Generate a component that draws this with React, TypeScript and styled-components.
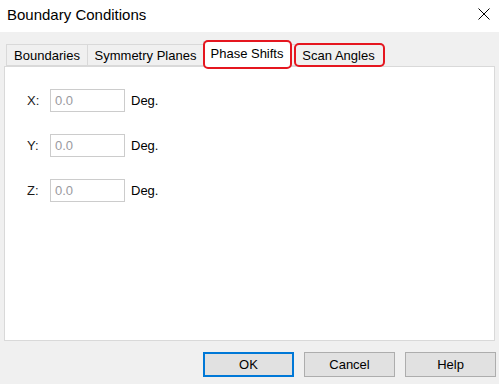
import React from "react";
import styled, { createGlobalStyle } from "styled-components";

const Global = createGlobalStyle`
  html, body { margin: 0; padding: 0; background: #f0f0f0; }
  body { font-family: "Liberation Sans", Arial, sans-serif; font-size: 13px; color: #000; }
  * { box-sizing: border-box; }
`;

const Window = styled.div`
  width: 499px;
  height: 384px;
  display: flex;
  flex-direction: column;
  background: #f0f0f0;
  overflow: hidden;
`;

const TitleBar = styled.div`
  height: 32px;
  background: #ffffff;
  display: flex;
  align-items: center;
  justify-content: space-between;
  padding: 0 9px 4px 7px;
`;

const Title = styled.span`
  font-size: 15px;
  color: #000;
`;

const CloseIcon = styled.svg`
  width: 12px;
  height: 12px;
  display: block;
`;

const Body = styled.div`
  padding: 9px 4px 0 4px;
  display: flex;
  flex-direction: column;
`;

const TabStrip = styled.div`
  height: 25px;
  display: flex;
  align-items: flex-end;
  padding-left: 2px;
  position: relative;
  z-index: 1;
`;

const Tab = styled.div<{ $w: number; $selected?: boolean; $marked?: boolean; $markLeft?: number }>`
  position: relative;
  width: ${(p) => p.$w}px;
  height: ${(p) => (p.$selected ? 26 : 22)}px;
  margin-bottom: ${(p) => (p.$selected ? -1 : 0)}px;
  margin-left: -1px;
  &:first-child { margin-left: 0; }
  background: ${(p) => (p.$selected ? "#ffffff" : "#f0f0f0")};
  border: 1px solid #d9d9d9;
  border-bottom: ${(p) => (p.$selected ? "none" : "1px solid #d9d9d9")};
  display: flex;
  align-items: center;
  justify-content: center;
  font-size: 13px;
  color: #000;
  white-space: nowrap;
  padding-bottom: ${(p) => (p.$selected ? 2 : 0)}px;
  padding-left: ${(p) => (p.$markLeft ? p.$markLeft : 0)}px;
  z-index: ${(p) => (p.$selected ? 2 : 1)};
  &::after {
    content: "";
    display: ${(p) => (p.$marked ? "block" : "none")};
    position: absolute;
    top: -2px;
    bottom: -2px;
    left: ${(p) => (p.$markLeft ?? -1)}px;
    right: -2px;
    border: 2px solid #e5161f;
    border-radius: 5px;
  }
`;

const Panel = styled.div`
  height: 275px;
  background: #ffffff;
  border: 1px solid #d9d9d9;
  padding: 22px 0 0 22px;
  display: flex;
  flex-direction: column;
  gap: 22px;
`;

const FieldRow = styled.div`
  display: grid;
  grid-template-columns: 17px 75px auto;
  column-gap: 6px;
  align-items: center;
  height: 23px;
`;

const Label = styled.span`
  font-size: 13px;
  color: #1a1a1a;
`;

const Input = styled.div`
  height: 23px;
  border: 1px solid #cccccc;
  background: #ffffff;
  color: #9a9aa0;
  font-size: 13px;
  padding-left: 4px;
  display: flex;
  align-items: center;
`;

const Unit = styled.span`
  font-size: 13px;
  color: #000;
`;

const ButtonRow = styled.div`
  display: flex;
  justify-content: flex-end;
  gap: 10px;
  padding: 11px 3px 0 0;
`;

const Button = styled.div<{ $default?: boolean }>`
  width: 91px;
  height: 25px;
  background: #e1e1e1;
  border: ${(p) => (p.$default ? "2px solid #0078d7" : "1px solid #adadad")};
  display: flex;
  align-items: center;
  justify-content: center;
  font-size: 13px;
  color: #000;
`;

const tabs = [
  { label: "Boundaries", w: 82 },
  { label: "Symmetry Planes", w: 117 },
  { label: "Phase Shifts", w: 88, selected: true, marked: true },
  { label: "Scan Angles", w: 94, marked: true, markLeft: 3 },
];

const fields = ["X:", "Y:", "Z:"];

export default function App() {
  return (
    <>
      <Global />
      <Window>
        <TitleBar>
          <Title>Boundary Conditions</Title>
          <CloseIcon viewBox="0 0 12 12">
            <path d="M0.5 0.5 L11.5 11.5 M11.5 0.5 L0.5 11.5" stroke="#000" strokeWidth="1" fill="none" />
          </CloseIcon>
        </TitleBar>
        <Body>
          <TabStrip>
            {tabs.map((t) => (
              <Tab
                key={t.label}
                $w={t.w}
                $selected={t.selected}
                $marked={t.marked}
                $markLeft={t.markLeft}
              >
                {t.label}
              </Tab>
            ))}
          </TabStrip>
          <Panel>
            {fields.map((f) => (
              <FieldRow key={f}>
                <Label>{f}</Label>
                <Input>0.0</Input>
                <Unit>Deg.</Unit>
              </FieldRow>
            ))}
          </Panel>
        </Body>
        <ButtonRow>
          <Button $default>OK</Button>
          <Button>Cancel</Button>
          <Button>Help</Button>
        </ButtonRow>
      </Window>
    </>
  );
}
